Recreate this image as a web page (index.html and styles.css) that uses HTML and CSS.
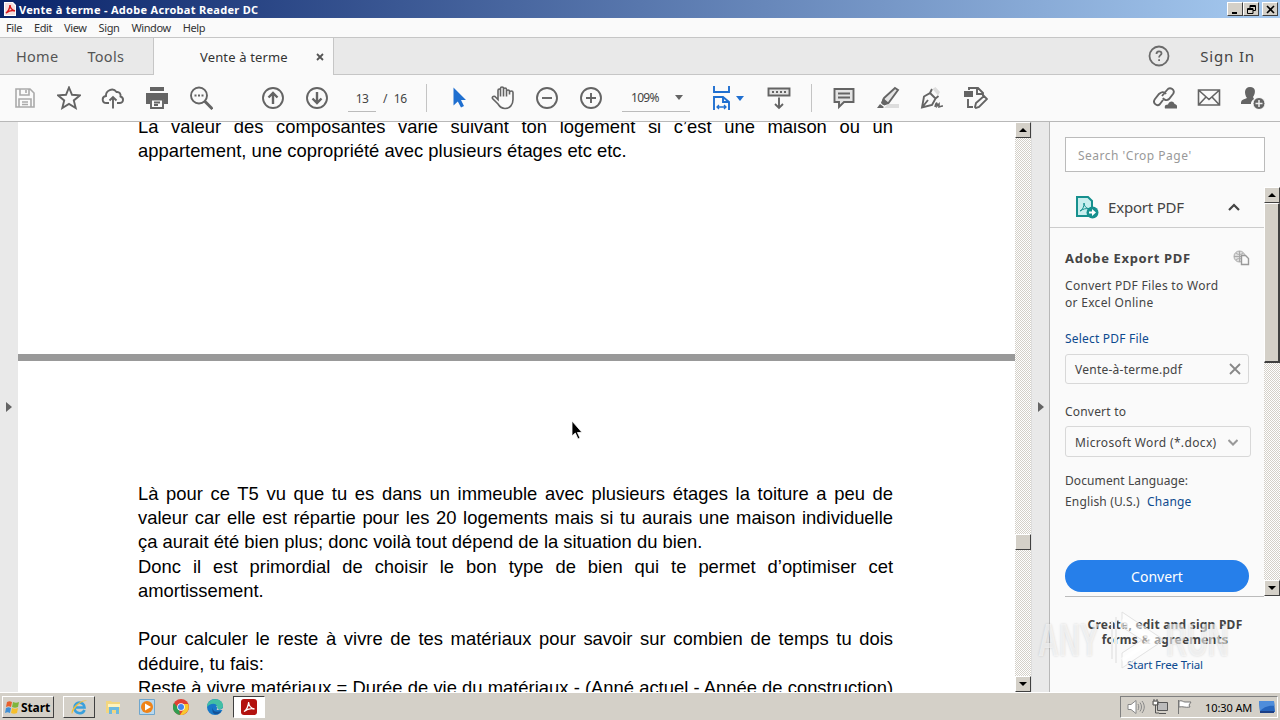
FILE: index.html
```html
<!-- index.html -->
<!DOCTYPE html>
<html lang="fr">
<head>
  <meta charset="UTF-8">
  <meta name="viewport" content="width=device-width, initial-scale=1">
  <title>Vente à terme - Adobe Acrobat Reader DC</title>
  <link rel="stylesheet" href="styles.css">
</head>
<body>

  <!-- TITLE BAR -->
  <div class="titlebar">
    <svg class="app-icon" width="12" height="14" viewBox="0 0 12 14"><path d="M1 0h8l3 3v11H0V0z" fill="#fff"/><path d="M1 1h7l3 3v9H1z" fill="#f4dede"/><path d="M2 11c2-1 4-5 4-8 0 3 2 5 5 6-3-1-6 0-9 2z" fill="none" stroke="#d7191c" stroke-width="1.5"/></svg>
    <span class="window-title">Vente à terme - Adobe Acrobat Reader DC</span>
    <div class="window-buttons">
      <button class="win-btn"><svg width="9" height="9"><path d="M1 7h5v2H1z"/></svg></button>
      <button class="win-btn"><svg width="9" height="9" fill="none" stroke="#000"><path d="M3 3V.5h5.500v5H6M3 1.500h5M.5 3.500H6v5H.5zM0 4.500h6"/></svg></button>
      <button class="win-btn win-close"><svg width="9" height="9"><path d="M1 1l7 7M8 1L1 8" stroke="#000" stroke-width="1.600"/></svg></button>
    </div>
  </div>

  <!-- MENU -->
  <div class="menubar">
    <span>File</span><span>Edit</span><span>View</span><span>Sign</span><span>Window</span><span>Help</span>
  </div>

  <!-- TABS -->
  <div class="tabbar">
    <div class="tabs-left"><span>Home</span><span>Tools</span></div>
    <div class="tab-active">
      <span>Vente à terme</span>
      <svg width="8" height="8"><path d="M1 1l6 6M7 1L1 7" stroke="#555" stroke-width="1.800"/></svg>
    </div>
    <div class="tabs-right">
      <svg width="22" height="22" viewBox="0 0 22 22"><circle cx="11" cy="11" r="9.500" fill="none" stroke="#6a6a6a" stroke-width="1.800"/><path d="M8.500 9c0-3.500 5-3.500 5-.6 0 1.800-2.400 1.800-2.400 4M11.100 14.200v1.800" fill="none" stroke="#6a6a6a" stroke-width="1.800"/></svg>
      <span>Sign In</span>
    </div>
  </div>

  <!-- TOOLBAR -->
  <div class="toolbar">
    <div class="tools">
      <div class="tool"><svg class="pale" viewBox="0 0 24 24"><path d="M3 3h14l4 4v14H3zM7 3v6h9V3M13 4v3M6 21v-8h12v8M9 16h6M9 18.500h6"/></svg></div>
      <div class="tool"><svg viewBox="0 0 24 24"><path d="M12 1.500l3 7.300 7.800.6-6 5 1.900 7.600-6.700-4.100L5.300 22l1.900-7.600-6-5 7.800-.6z"/></svg></div>
      <div class="tool"><svg viewBox="0 0 24 24"><path d="M8 17H5.500C.5 17 .5 10.500 5 10 4.500 4.500 12 1 15.500 6c3-.5 4.500 2 4 4.500 4 1.500 3 6.500-1 6.500H16M12 22.500V11M8.500 14.500L12 11l3.500 3.500"/></svg></div>
      <div class="tool"><svg viewBox="0 0 24 24"><path d="M1 7h22v11h-4v-5H5v5H1zM5 1h14v4H5z" class="fill"/><path d="M6 13.500h12V22H6zM9 16.500h6M9 19h4"/></svg></div>
      <div class="tool"><svg viewBox="0 0 24 24"><circle cx="10" cy="9.500" r="8"/><path d="M15.500 15l8 8" stroke-width="3"/><path d="M5.500 8.500h2v2h-2zM9 8.500h2v2H9zM12.500 8.500h2v2h-2z" class="fill"/></svg></div>
    </div>
    <div class="tools paging">
      <div class="tool"><svg viewBox="0 0 24 24"><circle cx="12" cy="12" r="10"/><path d="M12 18V7M7.500 11.500L12 7l4.500 4.500" stroke-width="2.400"/></svg></div>
      <div class="tool"><svg viewBox="0 0 24 24"><circle cx="12" cy="12" r="10"/><path d="M12 6v11M7.500 12.500L12 17l4.500-4.500" stroke-width="2.400"/></svg></div>
    </div>
    <div class="page-input">13</div>
    <div class="page-total">/ 16</div>
    <div class="separator"></div>
    <div class="tools">
      <div class="tool"><svg viewBox="0 0 24 24"><path d="M6.500 1.500v18l4.300-4 3.200 6 3-1.500-3-6h5z" fill="#1f6fd0" stroke="none"/></svg></div>
      <div class="tool"><svg viewBox="0 0 24 24"><path d="M7 14V5c0-2 2.500-2 2.500 0v6-8c0-2 3-2 3 0v8-7c0-2 3-2 3 0v7-5c0-2 3-2 3 0v3-2c0-2 3.500-2 3.500 0v7c0 5-3 9-8 9-4 0-5.500-2-7-4.500L1.500 13c-1-2 2-3 3-1.500z" transform="translate(0 -.5)" stroke-width="1.600"/></svg></div>
      <div class="tool"><svg viewBox="0 0 24 24"><circle cx="12" cy="12" r="10"/><path d="M7 12h10"/></svg></div>
      <div class="tool"><svg viewBox="0 0 24 24"><circle cx="12" cy="12" r="10"/><path d="M7 12h10M12 7v10"/></svg></div>
    </div>
    <div class="zoom-level"><span>109%</span><i class="caret"></i></div>
    <div class="fit-tool">
      <svg width="20" height="26" viewBox="0 0 20 26"><path d="M2 1v6h15V1M2 25V12h9l6 5v8M11 12v5h6" fill="none" stroke="#1f6fd0" stroke-width="1.900"/><path d="M5 22h9M7 20l-2 2 2 2M12 20l2 2-2 2" fill="none" stroke="#1f6fd0" stroke-width="1.300"/></svg>
      <i class="caret blue"></i>
    </div>
    <div class="tool"><svg viewBox="0 0 24 24"><path d="M1.500 2.500h21v7h-21z" fill="#e4e4e4"/><path d="M5 6h14" stroke-dasharray="2 2"/><path d="M12 11.500v11M8 18l4 4 4-4"/></svg></div>
    <div class="separator sep2"></div>
    <div class="tools comments">
      <div class="tool"><svg viewBox="0 0 24 24"><path d="M2.500 3h19v13H12l-5 5v-5H2.500z" fill="#e4e4e4"/><path d="M6 7.500h12M6 11.500h12"/></svg></div>
      <div class="tool"><svg viewBox="0 0 24 24"><path d="M12 18h11v4H8z" fill="#ddd" stroke="none"/><path d="M19 2l3 2-9.500 13-4 1.500-2-2L8 12z" fill="#e4e4e4"/><path d="M1 22l3-4 4 3-1 1zM7 12l6 5-6 2-2-2z" class="fill"/></svg></div>
      <div class="tool"><svg viewBox="0 0 24 24"><path d="M12 3l-2 4-6 3.500L2 21.500 12 19l3.500-6.500 3-2.500M10 7l5.500 5.500M2 21.500l6-7.500"/><path d="M12.500 3l3-2 4.500 5-2 3.500z" fill="#ddd" stroke="none"/><path d="M15 21c1-5 2.500-5 2-1l2-2v3l3-1v1" stroke-width="1.600"/></svg></div>
      <div class="tool"><svg viewBox="0 0 24 24"><path d="M0 5h9v6H0z" class="fill"/><path d="M5 4V2h9l5 5v3M13 2v6h6M4 13v8h5M12 22l-1-1 1-4 8-7 3 3-8 8z"/></svg></div>
    </div>
    <div class="tools share">
      <div class="tool"><svg viewBox="0 0 24 24"><path d="M9 10l5-6c3-4 9 0 6 4l-4 5c-2 2-5 1-6-1M13 8C11 5 8 6 6 8l-4 5c-3 4 2 8 5 5l3-4"/><path d="M12 22.500c-1-3 1-4 3-4 1-4 6-4 6.500-.5 3 .5 3 3 2.500 4.500z" class="fill"/></svg></div>
      <div class="tool"><svg viewBox="0 0 24 24"><path d="M1.500 4h21v15h-21zM1.500 4L12 13.500 22.500 4M1.500 19L9 11M22.500 19L15 11" stroke-width="1.600"/></svg></div>
      <div class="tool"><svg viewBox="0 0 24 24"><path d="M9 1c6 0 6 6 3 10l1 2c-3 2-3 4-3 5H0c0-4 1-4 6-6C3 8 3 1 9 1z" class="fill"/><circle cx="18" cy="17.500" r="6" fill="#646464" stroke="#fafafa" stroke-width="1"/><path d="M18 14v7M14.500 17.500h7" stroke="#eee" stroke-width="1.500"/></svg></div>
    </div>
  </div>

  <!-- DOCUMENT AND SIDE PANEL -->
  <div class="workspace">
    <div class="rail rail-left"><i class="rail-arrow"></i></div>

    <div class="document">
      <div class="page page-top">
        <p class="full">La valeur des composantes varie suivant ton logement si c’est une maison ou un</p>
        <p>appartement, une copropriété avec plusieurs étages etc etc.</p>
      </div>
      <div class="page page-bottom">
        <p class="full">Là pour ce T5 vu que tu es dans un immeuble avec plusieurs étages la toiture a peu de</p>
        <p class="full">valeur car elle est répartie pour les 20 logements mais si tu aurais une maison individuelle</p>
        <p>ça aurait été bien plus; donc voilà tout dépend de la situation du bien.</p>
        <p class="full">Donc il est primordial de choisir le bon type de bien qui te permet d’optimiser cet</p>
        <p>amortissement.</p>
        <p class="blank"></p>
        <p class="full">Pour calculer le reste à vivre de tes matériaux pour savoir sur combien de temps tu dois</p>
        <p>déduire, tu fais:</p>
        <p class="full">Reste à vivre matériaux = Durée de vie du matériaux - (Anné actuel - Année de construction)</p>
      </div>
      <svg class="cursor" width="12" height="20" viewBox="0 0 12 20"><path d="M1 1v15l3.300-3 2.700 6 2-1-2.600-5.500H11z" fill="#000" stroke="#fff" stroke-width=".8"/></svg>
    </div>

    <div class="scrollbar doc-scroll">
      <span class="scroll-btn"><i class="up"></i></span>
      <span class="scroll-thumb"></span>
      <span class="scroll-btn"><i class="down"></i></span>
    </div>
    <div class="rail rail-right"><i class="rail-arrow"></i></div>

    <div class="sidebar">
      <div class="search">Search 'Crop Page'</div>
      <div class="side-body">
        <div class="panel">
          <div class="panel-head">
            <svg width="24" height="24" viewBox="0 0 24 24"><path d="M2 2h11l4 4v15H2z" fill="#c9eeee" stroke="#16908e" stroke-width="2"/><path d="M5 16c3-1 4-5 4-8 0 3 2 5 5 6-3-1-6 0-9 2z" fill="none" stroke="#16908e"/><circle cx="17.500" cy="17.500" r="6" fill="#16908e"/><path d="M14 16.500h3V14l4 3.500-4 3.500v-2.500h-3z" fill="#fff"/></svg>
            <span>Export PDF</span>
            <svg width="12" height="8"><path d="M1 7l5-5 5 5" fill="none" stroke="#444" stroke-width="2.200"/></svg>
          </div>
          <div class="panel-content">
            <div class="panel-title">
              <b>Adobe Export PDF</b>
              <svg width="17" height="16"><circle cx="6.500" cy="6.500" r="5.500" fill="#ddd" stroke="#aaa"/><path d="M1 6.500h11M6.500 1v11M3 3c2 2 5 2 7 0M3 10c2-2 5-2 7 0" fill="none" stroke="#aaa"/><path d="M8.500 5.500h4l3 3v6h-7z" fill="#fafafa" stroke="#999" stroke-width="1.400"/></svg>
            </div>
            <p class="desc">Convert PDF Files to Word<br>or Excel Online</p>
            <a class="link select-file">Select PDF File</a>
            <div class="field">
              <span class="file-name">Vente-à-terme.pdf</span>
              <svg width="12" height="12"><path d="M1 1l10 10M11 1L1 11" stroke="#888" stroke-width="1.800"/></svg>
            </div>
            <label>Convert to</label>
            <div class="field field-select">
              <span>Microsoft Word (*.docx)</span>
              <svg width="10" height="7"><path d="M.5 1L5 5.500 9.500 1" fill="none" stroke="#999" stroke-width="2"/></svg>
            </div>
            <p class="lang">Document Language:</p>
            <p class="lang-value">English (U.S.) <a class="link">Change</a></p>
            <button class="convert">Convert</button>
          </div>
        </div>
        <div class="scrollbar side-scroll">
          <span class="scroll-btn"><i class="up"></i></span>
          <span class="scroll-thumb"></span>
          <span class="scroll-btn"><i class="down"></i></span>
        </div>
      </div>
      <div class="promo">
        <b>Create, edit and sign PDF<br>forms &amp; agreements</b>
        <a class="link">Start Free Trial</a>
      </div>
      <div class="watermark">
        <span>ANY</span>
        <svg width="62" height="66" viewBox="0 0 62 66"><path d="M18 5l42 28-42 28V46l20-13-20-13z" fill="#fff" fill-opacity=".5" stroke="#e2e2e2"/><path d="M18 13l31 20-31 20" fill="none" stroke="#fff" stroke-opacity=".7" stroke-width="4"/><path d="M8 14v38M12 10v46" stroke="#ebebeb" stroke-width="2"/></svg>
        <span>RUN</span>
      </div>
    </div>
  </div>

  <!-- TASKBAR -->
  <div class="taskbar">
    <div class="start">
      <svg width="15" height="15" viewBox="0 0 15 15"><path d="M2 2c2-1 3-1 5 0L6 7C4 6 3 6 1 7z" fill="#e8602c"/><path d="M8 2c2 1 4 1 6 0l-1 5c-2 1-4 1-6 0z" fill="#7fb53c"/><path d="M1 8c2-1 3-1 5 0l-1 5c-2-1-3-1-5 0z" fill="#3f8fd6"/><path d="M7 8c2 1 4 1 6 0l-1 5c-2 1-4 1-6 0z" fill="#f6bf2c"/></svg>
      <b>Start</b>
    </div>
    <div class="task raised">
      <svg width="18" height="18" viewBox="0 0 18 18"><path d="M14.500 12c-2 5-10 4-10-2.500S14 3 14.500 9.500H6" fill="none" stroke="#3aa0dc" stroke-width="2.600"/><path d="M2 16C-1 12 11 0 17 3c-5-1-12 5-15 13z" fill="#f0bf3a"/></svg>
    </div>
    <div class="task">
      <svg width="17" height="16" viewBox="0 0 17 16"><path d="M1 2h5l1 1h8v11H1z" fill="#f2d680"/><path d="M3 5h12v3H3z" fill="#fff3bd"/><path d="M4 15V8h10v7h-3v-4H7v4z" fill="#6db9df"/></svg>
    </div>
    <div class="task">
      <svg width="16" height="16" viewBox="0 0 16 16"><path d="M.5.500h15v15H.5z" fill="#b9d8ee" stroke="#6fa6cd"/><circle cx="8" cy="8" r="6" fill="#ef8318"/><path d="M6 4.500L12 8l-6 3.500z" fill="#fff"/></svg>
    </div>
    <div class="task">
      <svg width="16" height="16" viewBox="0 0 16 16"><circle cx="8" cy="8" r="8" fill="#e04033"/><path d="M1 4l5 6 1 6C1 15-2 9 1 4z" fill="#2f9d50"/><path d="M15.200 5H8l3 5-4 6c7 0 10-6 8.200-11z" fill="#f8c92d"/><circle cx="8" cy="8" r="3.800" fill="#fff"/><circle cx="8" cy="8" r="3" fill="#4185ec"/></svg>
    </div>
    <div class="task">
      <svg width="16" height="16" viewBox="0 0 16 16"><circle cx="8" cy="8" r="8" fill="#1878c8"/><path d="M0 8C0-2 16-2 16 7c0 4-5 4-6 2 1-5-6-6-10-1z" fill="#43bfa4"/><path d="M6 8c-1 4 3 6 8 4-2 5-11 5-8-4z" fill="#145297"/><path d="M9 7c3 0 0 3 1 4l6 0V9c-2 2-4 2-5 1z" fill="#d6d2cb"/></svg>
    </div>
    <div class="task pressed">
      <svg width="16" height="16" viewBox="0 0 16 16"><rect width="16" height="16" rx="3" fill="#b3120f"/><path d="M3 12.500c2-1 5-6 4.500-9.500.5 4 3 6.500 6 7-4-.8-8 .5-10.500 2.500z" fill="none" stroke="#fff" stroke-width="1.300"/></svg>
    </div>
    <div class="tray">
      <svg width="18" height="16" viewBox="0 0 18 16" fill="none" stroke="#888"><path d="M1 5.500h3l5-4v13l-5-4H1z" fill="#fff"/><path d="M11 5c1 2 1 4 0 6M13 3.500c2 3 2 6 0 9M15 2c3 4 3 8 0 12"/></svg>
      <svg width="17" height="16" viewBox="0 0 17 16"><path d="M5.500 3.500h10v8h-10z" fill="#bbb" stroke="#555"/><path d="M7 14.500h7M1 2h5v4H1zM3.500 6v8H7M2 0v2M5 0v2" fill="none" stroke="#555"/><path d="M2 3h3v2H2z" fill="#fff"/></svg>
      <svg width="17" height="16" viewBox="0 0 17 16"><path d="M2.500 1v14M3 2c3-1 4 1 6 1h6l-2 3 1 2c-5 1-7-1-11 0z" fill="#fff" stroke="#777"/></svg>
      <span class="clock">10:30 AM</span>
      <svg width="16" height="14" viewBox="0 0 16 14"><path d="M0 1h15l1 11H1z" fill="#2665bd"/><path d="M0 1h15l.4 5C9 5 4 8 1 11z" fill="#4e8ddb"/><path d="M1 11h14v2H1z" fill="#1b3f86"/></svg>
    </div>
  </div>

</body>
</html>
```
FILE: styles.css
```css
/* RESET */
* { box-sizing: border-box; margin: 0; padding: 0; }
body {
  width: 1280px; height: 720px; overflow: hidden;
  display: flex; flex-direction: column;
  font-family: "Noto Sans", "Open Sans", sans-serif;
  background: #fafafa; color: #444;
}
svg { display: block; flex: none; }
span, b, p, a { white-space: nowrap; }

/* TITLE BAR */
.titlebar {
  height: 18px; flex: none; display: flex; align-items: center;
  padding: 0 2px 0 4px;
  background: linear-gradient(to right, #0a246a, #a6caf0);
}
.window-title { margin-left: 3px; color: #fff; font-size: 11px; font-weight: bold; letter-spacing: .3px; }
.window-buttons { margin-left: auto; display: flex; }
.win-btn {
  width: 16px; height: 14px; background: #d4d0c8;
  border: 1px solid; border-color: #fff #404040 #404040 #fff;
  display: flex; align-items: center; justify-content: center;
}
.win-close { margin-left: 3px; }

/* MENU */
.menubar {
  height: 20px; flex: none; display: flex; align-items: center; gap: 12px;
  padding: 0 6px; border-bottom: 1px solid #c6c6c6;
  font-size: 11px; letter-spacing: -.4px; color: #333;
}

/* TABS */
.tabbar { height: 37px; flex: none; display: flex; background: #e9e9e9; font-size: 15px; }
.tabs-left {
  width: 154px; padding-left: 16px; display: flex; align-items: center; gap: 29px;
  border-right: 1px solid #c6c6c6; border-bottom: 1px solid #c6c6c6;
  font-size: 14.5px; letter-spacing: .3px; color: #555;
}
.tab-active {
  width: 179px; display: flex; align-items: center; background: #fafafa;
  padding-left: 46px; gap: 28px; font-size: 13px; letter-spacing: .15px; color: #333;
}
.tabs-right {
  flex: 1; display: flex; align-items: center; justify-content: flex-end; gap: 30px;
  padding-right: 25px; border-left: 1px solid #c6c6c6; border-bottom: 1px solid #c6c6c6;
  letter-spacing: .85px;
}

/* TOOLBAR */
.toolbar {
  height: 47px; flex: none; display: flex; align-items: center;
  padding: 0 5px 0 3px; background: #fafafa; border-bottom: 1px solid #b8b8b8;
}
.tools { display: flex; }
.tool { width: 44px; display: flex; justify-content: center; }
.tool svg { width: 24px; height: 24px; fill: none; stroke: #646464; stroke-width: 1.9; }
.tool svg .fill { fill: #646464; stroke: none; }
.tool svg.pale { stroke: #aaa; stroke-width: 1.6; }
.paging { margin-left: 28px; }
.page-input {
  width: 28px; height: 27px; margin-left: 9px; border-bottom: 1px solid #bbb;
  text-align: center; font-size: 12px; line-height: 27px; letter-spacing: -.6px;
}
.page-total { width: 43px; margin-left: 7px; font-size: 12px; letter-spacing: -.4px; word-spacing: 4px; }
.separator { width: 1px; height: 28px; margin: 0 10px 0 0; background: #c4c4c4; }
.zoom-level {
  width: 68px; height: 27px; margin-left: 9px; border-bottom: 1px solid #bbb;
  display: flex; align-items: center; justify-content: space-between;
  padding: 0 7px 0 9px; font-size: 12px; letter-spacing: -.7px;
}
.caret { border: 4px solid transparent; border-top: 5px solid #646464; border-bottom: 0; }
.blue { border-top-color: #1f6fd0; }
.fit-tool { display: flex; align-items: center; gap: 4px; margin: 0 13px 0 22px; }
.sep2 { margin-left: 10px; }
.share { margin-left: auto; }

/* WORKSPACE */
.workspace { height: 570px; flex: none; display: flex; }
.rail { width: 18px; background: #e9e9e9; display: flex; align-items: center; justify-content: center; }
.rail-right { width: 19px; border-right: 1px solid #b8b8b8; border-left: 1px solid #ddd; }
.rail-arrow { border: 5px solid transparent; border-left: 6px solid #646464; border-right: 0; }

/* DOCUMENT */
.document {
  position: relative; width: 997px; flex: none; background: #999; overflow: hidden;
  display: flex; flex-direction: column; gap: 7px;
  font-family: "Liberation Sans", Arial, sans-serif; font-size: 18.4px; color: #000;
}
.page { background: #fff; padding: 0 122px 0 120px; flex: none; }
.page p { height: 24.3px; line-height: 24.3px; }
.page .full { text-align: justify; text-align-last: justify; white-space: normal; }
.page-top { height: 232px; }
.page-top p { transform: translateY(-7px); }
.page-bottom { height: 331px; padding-top: 120.7px; }
.cursor { position: absolute; left: 553px; top: 298px; }

/* SCROLLBARS */
.scrollbar {
  display: flex; flex-direction: column; width: 16px; flex: none;
  background: repeating-conic-gradient(#d4d0c8 0 25%, #fff 0 50%) 0 0 / 2px 2px;
}
.scroll-btn, .scroll-thumb {
  height: 16px; flex: none; background: #d4d0c8;
  border: 1px solid; border-color: #fff #404040 #404040 #fff;
  display: flex; align-items: center; justify-content: center;
}
.up { border: 4px solid transparent; border-top: 0; border-bottom: 4px solid #000; }
.down { border: 4px solid transparent; border-bottom: 0; border-top: 4px solid #000; }
.doc-scroll .scroll-thumb { margin: 396px 0 auto; }
.side-scroll .scroll-thumb { height: 160px; margin-bottom: auto; border-right-width: 2px; border-bottom-width: 2px; }

/* SIDE PANEL */
.sidebar { position: relative; flex: 1; background: #fafafa; display: flex; flex-direction: column; }
.search {
  width: 200px; height: 35px; margin: 15px 0 15px 15px; flex: none;
  border: 1px solid #bbb; background: #fff; color: #999;
  padding-left: 12px; font-size: 12px; line-height: 35px; letter-spacing: .5px;
}
.side-body { display: flex; height: 409px; flex: none; }
.panel { flex: 1; }
.panel-head {
  height: 41px; display: flex; align-items: center; padding: 0 24px 0 25px;
  border-bottom: 1px solid #ccc; font-size: 15px; letter-spacing: -.2px;
}
.panel-head span { margin: 0 auto 0 9px; }
.panel-content { margin-left: 15px; padding-top: 20px; font-size: 12px; height: 369px; border-bottom: 1px solid #bbb; }
.panel-title { display: flex; width: 185px; height: 20px; align-items: center; justify-content: space-between; font-size: 13px; letter-spacing: .65px; }
.desc { margin-top: 9px; line-height: 17px; letter-spacing: .3px; }
.link { color: #0d4a8f; }
.select-file { display: block; margin-top: 19px; line-height: 17px; letter-spacing: .2px; }
.field {
  width: 184px; height: 30px; margin: 7px 0 19px; padding: 0 7px 0 9px;
  border: 1px solid #d8d8d8; border-radius: 3px;
  display: flex; align-items: center; justify-content: space-between; letter-spacing: .25px;
}
label { display: block; height: 17px; line-height: 17px; letter-spacing: .2px; }
.field-select { width: 186px; height: 31px; padding: 2px 12px 0 9px; margin: 6px 0 15px; letter-spacing: .35px; }
.lang { line-height: 17px; letter-spacing: .1px; }
.lang-value { margin-top: 4px; line-height: 17px; letter-spacing: .15px; }
.lang-value .link { margin-left: 4px; letter-spacing: .2px; }
.convert {
  display: block; width: 184px; height: 32px; margin-top: 50px; border: 0; border-radius: 16px;
  background: #267fea; color: #fff; font: 14px "Noto Sans", sans-serif;
}
.promo { display: flex; flex-direction: column; align-items: center; padding-top: 21px; font-size: 12px; line-height: 15px; text-align: center; letter-spacing: .22px; }
.promo .link { margin-top: 10px; font-size: 11.5px; letter-spacing: -.15px; }

/* WATERMARK */
.watermark {
  position: absolute; left: -12px; top: 485px; display: flex; align-items: center;
  font: bold 46px/66px "Liberation Sans", sans-serif; color: rgba(255, 255, 255, .6);
  text-shadow: 0 0 3px rgba(0, 0, 0, .15);
}
.watermark span { display: block; width: 66px; transform: scaleX(.63); transform-origin: left; }

/* TASKBAR */
.taskbar {
  height: 28px; flex: none; display: flex; align-items: center;
  background: #d4d0c8; border-top: 1px solid #fff; padding: 1px 2px 0;
}
.start {
  width: 52px; height: 22px; display: flex; align-items: center; gap: 1px; padding-left: 2px;
  border: 1px solid; border-color: #fff #404040 #404040 #fff;
  color: #000; font-size: 12px; letter-spacing: -.1px; margin-right: 9px;
}
.task { width: 32px; height: 22px; margin-right: 2px; display: flex; align-items: center; justify-content: center; }
.raised { border: 1px solid; border-color: #fff #404040 #404040 #fff; }
.pressed { border: 1px solid; border-color: #404040 #fff #fff #404040; background: #fff; }
.tray {
  width: 158px; height: 22px; margin-left: auto; display: flex; align-items: center; gap: 7px;
  padding-left: 6px; border: 1px solid; border-color: #808080 #fff #fff #808080;
}
.clock { color: #000; font-size: 11px; margin-left: 5px; letter-spacing: -.1px; }
```
